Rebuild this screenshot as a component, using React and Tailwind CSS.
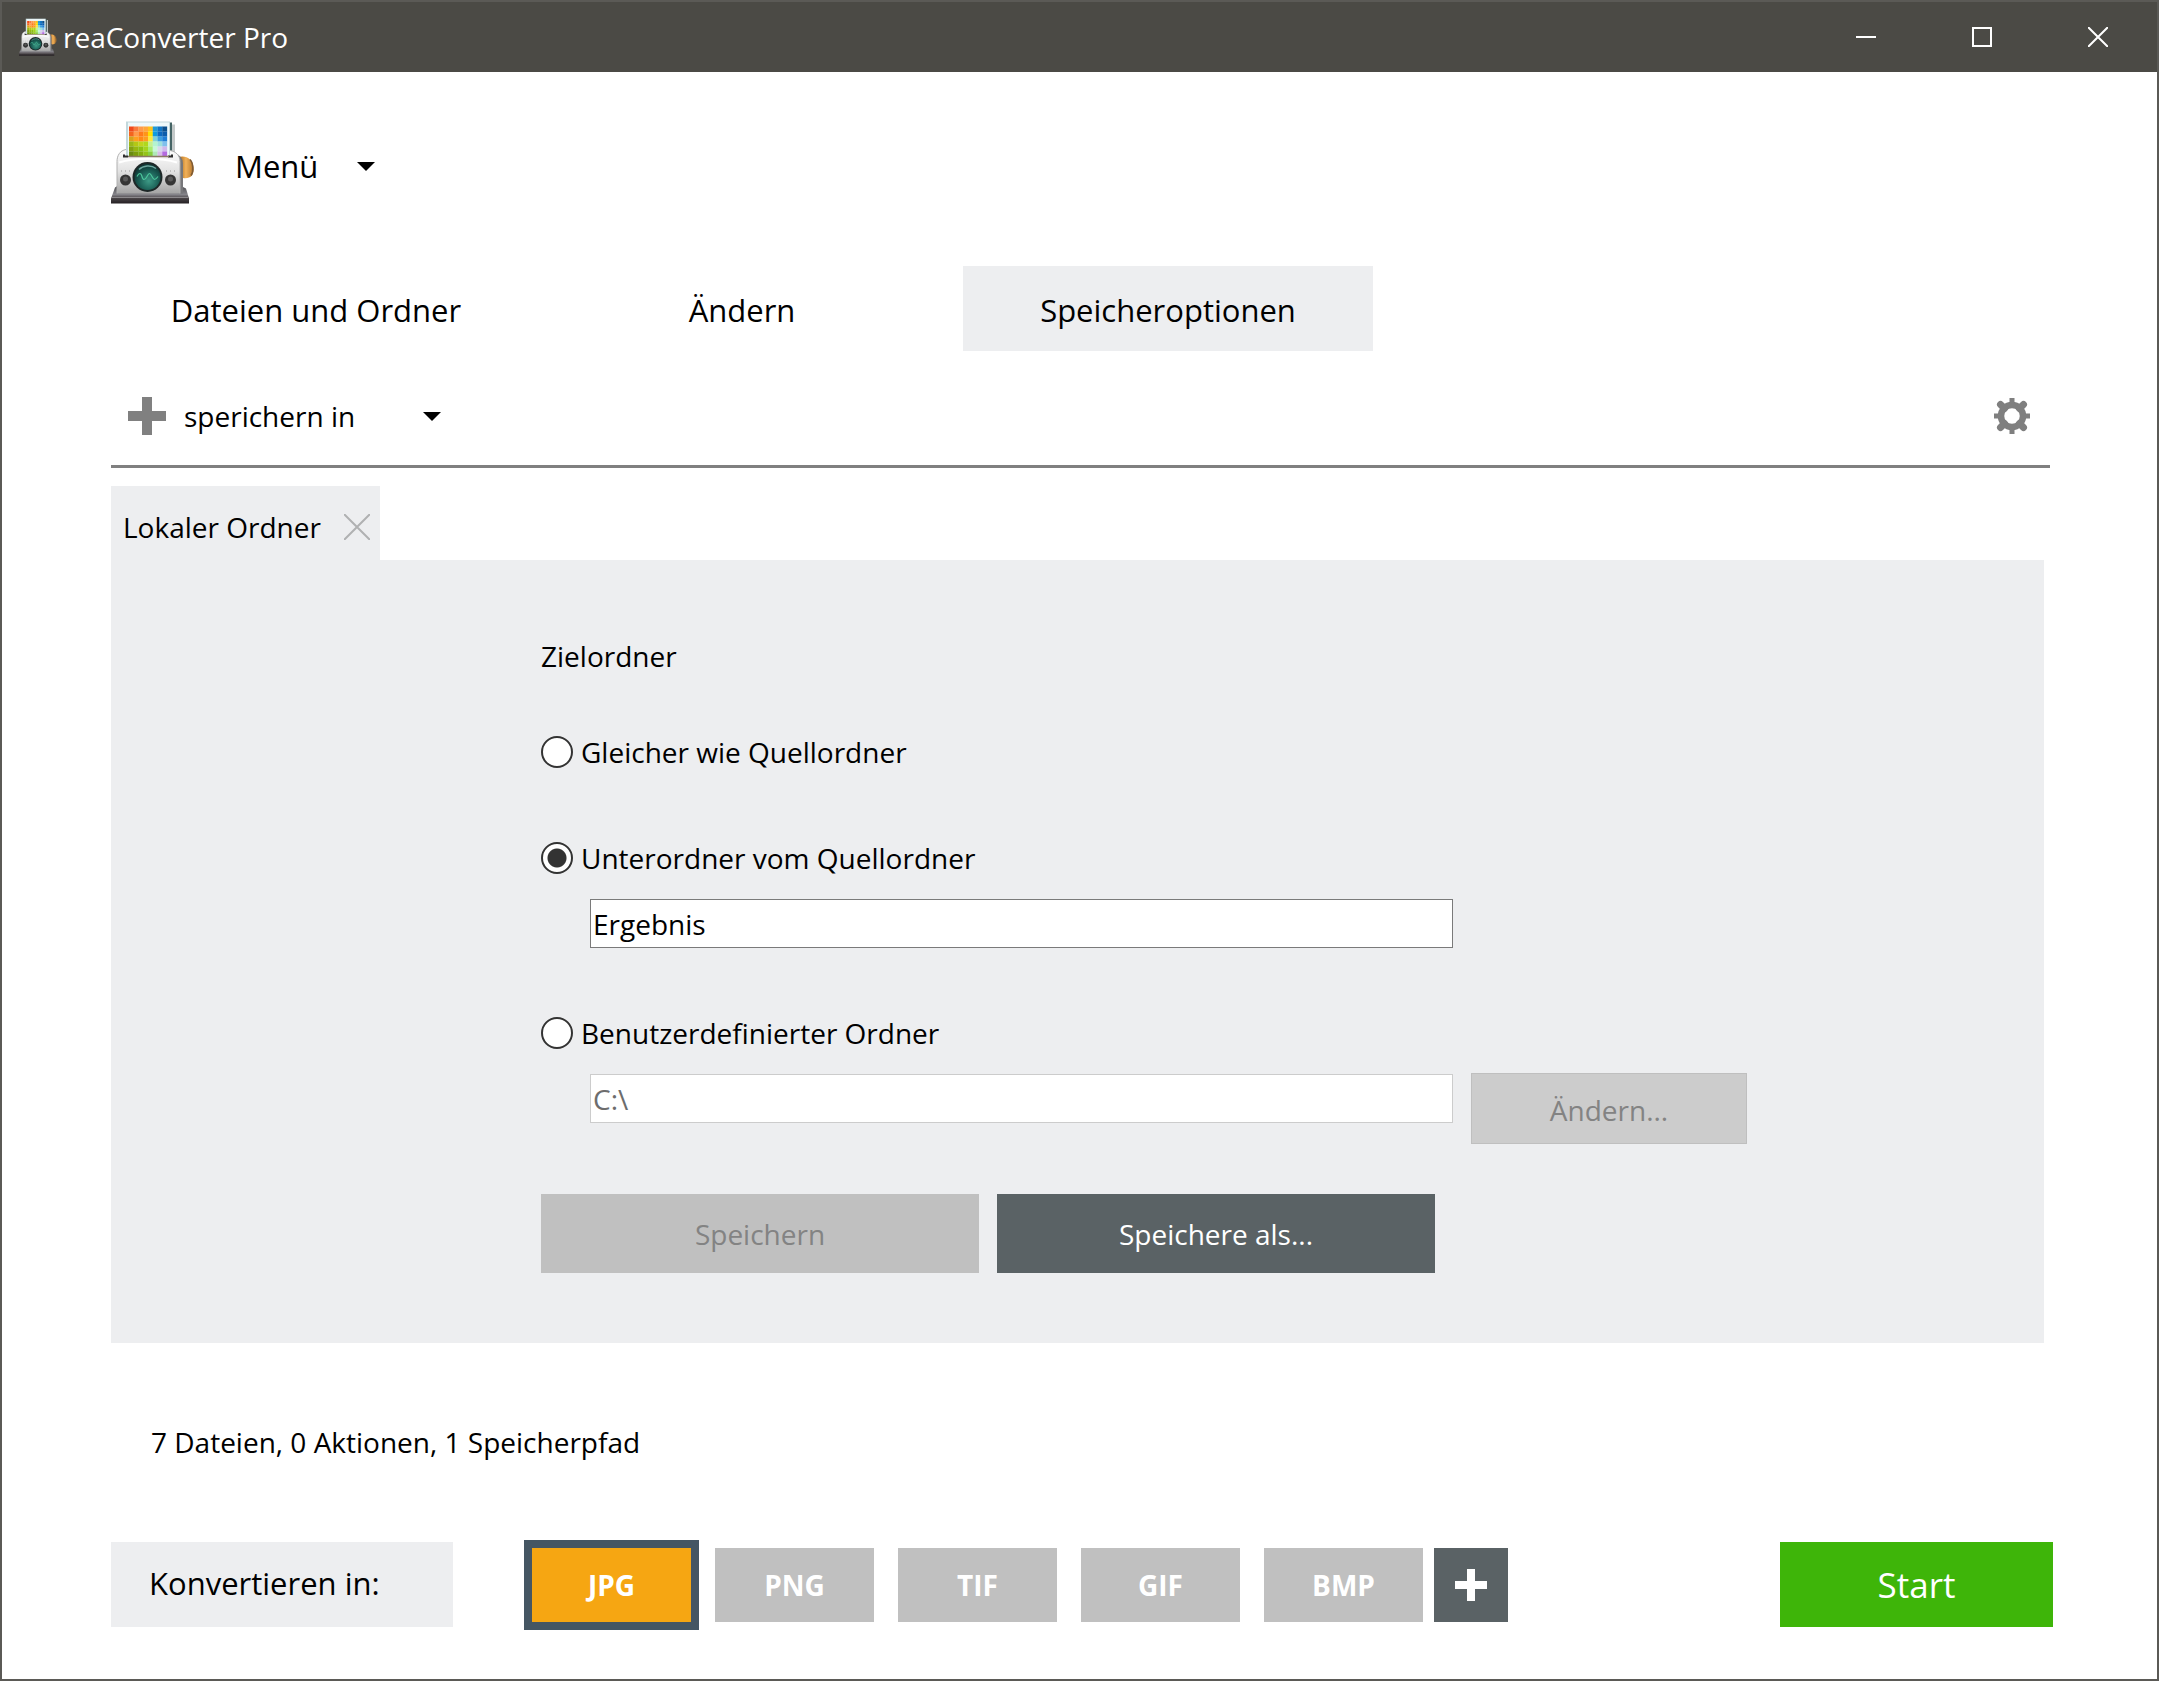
import React, { useState } from 'react';

const photoRows = [
  ['#f04a1c', '#f97a3c', '#ff9a48', '#ffa63b', '#ffc21a', '#1f9ad6', '#0f74c4', '#0a4f8c'],
  ['#f4641e', '#ff9a4a', '#ff7a1a', '#ff9518', '#ffe000', '#0f9be0', '#0a68c0', '#0b5cab'],
  ['#d8a21c', '#ffa020', '#ff8a14', '#ff9c20', '#ffe83a', '#7fd0d8', '#3a9ee0', '#1f7ed6'],
  ['#9ab818', '#b4c814', '#c0d41c', '#b0d81c', '#c8f090', '#b4f4d0', '#a0e0dc', '#80c0ec'],
  ['#84a010', '#96b810', '#8cc010', '#a4d41c', '#a8ec70', '#c8f8d8', '#d8d8ec', '#d0b8ec'],
  ['#6a8c10', '#7c9e0c', '#84b00c', '#94c418', '#88d040', '#b0e8b8', '#d8bce8', '#b46ae0'],
];

function Logo({ id, className }) {
  return (
    <svg viewBox="0 0 84 83" className={className} aria-hidden="true">
      <defs>
        <linearGradient id={`${id}-body`} x1="0" y1="0" x2="0" y2="1">
          <stop offset="0" stopColor="#fdfdfd" />
          <stop offset="0.5" stopColor="#e2e2e2" />
          <stop offset="1" stopColor="#a4a4a4" />
        </linearGradient>
        <linearGradient id={`${id}-base`} x1="0" y1="0" x2="0" y2="1">
          <stop offset="0" stopColor="#4c4c4f" />
          <stop offset="0.5" stopColor="#85848a" />
          <stop offset="0.7" stopColor="#4a4548" />
          <stop offset="1" stopColor="#241f22" />
        </linearGradient>
        <linearGradient id={`${id}-knob`} x1="0" y1="0" x2="1" y2="0">
          <stop offset="0" stopColor="#9a5c14" />
          <stop offset="0.5" stopColor="#f2b158" />
          <stop offset="1" stopColor="#b3742c" />
        </linearGradient>
        <radialGradient id={`${id}-lens`} cx="0.55" cy="0.65" r="0.6">
          <stop offset="0" stopColor="#3d9a86" />
          <stop offset="0.6" stopColor="#1c6258" />
          <stop offset="1" stopColor="#0f3a38" />
        </radialGradient>
      </defs>
      <path d="M67 37c4-2 9-1 12 2 4 3 5 12 2 16-3 3-8 4-12 1z" fill={`url(#${id}-knob)`} />
      <path d="M79 39c3 3 4 12 1 16" fill="none" stroke="#7d5a34" strokeWidth="1.5" />
      <path d="M61 4h3v30h-3z" fill="#c4c9c9" />
      <path d="M58 2h3v36h-3z" fill="#456465" />
      <path d="M15 1h44v38H15z" fill="#c3d8dc" />
      <path d="M17 2h41v37H17z" fill="#eef8fa" />
      {photoRows.map((row, y) =>
        row.map((color, x) => (
          <rect key={`${x}-${y}`} x={18 + x * 4.75} y={6 + y * 5} width="4.9" height="5.1" fill={color} />
        ))
      )}
      <path d="M0 78l4-11 3-2h62l6 3 3 10v5H0z" fill={`url(#${id}-base)`} />
      <path d="M1 77h76" stroke="#8c898c" strokeWidth="1" />
      <path d="M67 34c4 3 5 6 5 10v29h-5z" fill="#77777a" />
      <path d="M6 73V41c0-6 3-11 9-12v7h44v-6c6 1 10 5 10 11v32z" fill={`url(#${id}-body)`} />
      <path d="M6 73V41c0-6 3-11 9-12M59 30c6 1 10 5 10 11v32" fill="none" stroke="#b0b0b0" strokeWidth="1" />
      <path d="M13 34v2h4M57 36h4v-2" fill="none" stroke="#2e2e2e" strokeWidth="2" />
      <path d="M17 36h41" stroke="#8b7a64" strokeWidth="1.5" />
      <path d="M8 42c16-5 42-5 58 0" fill="none" stroke="#ffffff" strokeWidth="2" />
      <circle cx="14.5" cy="59.5" r="5.5" fill="#353535" />
      <circle cx="14.5" cy="58.5" r="2.5" fill="#5a5a5a" />
      <circle cx="59.5" cy="59.5" r="5.5" fill="#353535" />
      <circle cx="59.5" cy="58.5" r="2.5" fill="#5a5a5a" />
      <path d="M10 50.5h10M55 50.5h10" stroke="#9a9a9a" strokeWidth="1" strokeDasharray="1 3" />
      <circle cx="36.5" cy="56.5" r="15" fill="#1d2727" />
      <circle cx="36.5" cy="56.5" r="13" fill={`url(#${id}-lens)`} />
      <path
        d="M26 56c2-4 4-4 5 0s3 4 5 0 3-4 5 0 3 4 6 0"
        fill="none"
        stroke="#4cc59a"
        strokeWidth="1.2"
      />
      <path d="M28 49c4-4 12-5 17-1" fill="none" stroke="#6fa79f" strokeWidth="1.5" />
    </svg>
  );
}

function Arrow() {
  return (
    <svg viewBox="0 0 18 9" className="h-[9px] w-[18px]" aria-hidden="true">
      <path d="M0 0h18L9 9z" fill="#000" />
    </svg>
  );
}

function Gear() {
  return (
    <svg viewBox="0 0 36 36" className="h-9 w-9" fill="none" stroke="#7f7f7f" aria-hidden="true">
      <circle cx="18" cy="18" r="11" strokeWidth="6.5" />
      <path d="M18 0v6M18 30v6M0 18h6M30 18h6" strokeWidth="5" />
      <path d="M6.5 6.5l4 4M25.500 25.500l4 4M29.500 6.500l-4 4M10.500 25.500l-4 4" strokeWidth="7" strokeLinecap="round" />
    </svg>
  );
}

const radioClass =
  'h-8 w-8 shrink-0 appearance-none rounded-full border-2 border-[#333333] bg-white checked:bg-[radial-gradient(circle,#333333_9px,#ffffff_10px)]';

const tabs = ['Dateien und Ordner', 'Ändern', 'Speicheroptionen'];
const formats = ['JPG', 'PNG', 'TIF', 'GIF', 'BMP'];

function App() {
  const [activeTab, setActiveTab] = useState('Speicheroptionen');
  const [target, setTarget] = useState('sub');
  const [subfolder, setSubfolder] = useState('Ergebnis');
  const [format, setFormat] = useState('JPG');

  return (
    <div className="flex min-h-screen flex-col border-2 border-[#5b5a56] bg-white font-['Open_Sans','Noto_Sans',sans-serif] text-[28px] leading-10 text-black">
      {/* Titelleiste */}
      <header className="flex h-[70px] items-center bg-[#4b4a45] pr-px pl-[17px] text-white">
        <Logo id="small" className="h-[38px] w-[38px]" />
        <h1 className="ml-1.5 grow">reaConverter Pro</h1>
        <button type="button" aria-label="Minimieren" className="flex h-full w-[116px] items-center justify-center">
          <svg viewBox="0 0 20 20" className="h-5 w-5" stroke="#fff" strokeWidth="2">
            <path d="M0 10h20" />
          </svg>
        </button>
        <button type="button" aria-label="Maximieren" className="flex h-full w-[116px] items-center justify-center">
          <svg viewBox="0 0 20 20" className="h-5 w-5" fill="none" stroke="#fff" strokeWidth="2">
            <path d="M1 1h18v18H1z" />
          </svg>
        </button>
        <button type="button" aria-label="Schließen" className="flex h-full w-[116px] items-center justify-center">
          <svg viewBox="0 0 20 20" className="h-5 w-5" stroke="#fff" strokeWidth="2">
            <path d="M0 0l20 20M20 0L0 20" />
          </svg>
        </button>
      </header>

      <main className="flex grow flex-col pr-[104px] pl-[109px]">
        <div className="mt-12 flex items-center">
          <Logo id="large" className="h-[84px] w-[84px]" />
          <button type="button" className="ml-10 flex items-center gap-[39px] pt-2 text-[31px]">
            Menü
            <Arrow />
          </button>
        </div>

        {/* Hauptnavigation */}
        <nav className="mt-[62px] flex gap-4 text-[31px]">
          {tabs.map((tab) => (
            <button
              key={tab}
              type="button"
              onClick={() => setActiveTab(tab)}
              className={`h-[85px] w-[410px] pt-0.5 ${activeTab === tab ? 'bg-[#edeef0]' : ''}`}
            >
              {tab}
            </button>
          ))}
        </nav>

        <div className="mr-[3px] flex h-[117px] items-center justify-between border-b-[3px] border-[#808080] pt-4 pr-5 pl-[17px]">
          <button type="button" className="flex items-center">
            <svg viewBox="0 0 38 38" className="mr-[18px] h-[38px] w-[38px]" aria-hidden="true">
              <path d="M14 0h10v14h14v10H24v14H14V24H0V14h14z" fill="#808080" />
            </svg>
            <span className="mr-[68px]">sperichern in</span>
            <Arrow />
          </button>
          <button type="button" aria-label="Einstellungen">
            <Gear />
          </button>
        </div>

        {/* Speicherziel */}
        <div className="mt-[18px] mr-[9px]">
          <div className="flex h-[74px] w-[269px] items-center justify-between bg-[#edeef0] pt-2 pr-2.5 pl-3">
            <span>Lokaler Ordner</span>
            <button type="button" aria-label="Tab schließen">
              <svg viewBox="0 0 26 26" className="h-[26px] w-[26px]" stroke="#b0b1b2" strokeWidth="2">
                <path d="M0 0l26 26M26 0L0 26" />
              </svg>
            </button>
          </div>

          <form
            onSubmit={(e) => e.preventDefault()}
            className="flex flex-col items-start bg-[#edeef0] pt-[76px] pr-10 pb-[70px] pl-[430px]"
          >
            <h2>Zielordner</h2>
            <label className="mt-14 flex items-center gap-2">
              <input
                type="radio"
                name="target"
                className={radioClass}
                checked={target === 'same'}
                onChange={() => setTarget('same')}
              />
              Gleicher wie Quellordner
            </label>

            <label className="mt-[66px] flex items-center gap-2">
              <input
                type="radio"
                name="target"
                className={radioClass}
                checked={target === 'sub'}
                onChange={() => setTarget('sub')}
              />
              Unterordner vom Quellordner
            </label>
            <input
              type="text"
              aria-label="Unterordner"
              value={subfolder}
              onChange={(e) => setSubfolder(e.target.value)}
              className="mt-[21px] ml-[49px] h-[49px] w-[863px] border border-[#7a7a7a] bg-white px-0.5"
            />

            <label className="mt-[65px] flex items-center gap-2">
              <input
                type="radio"
                name="target"
                className={radioClass}
                checked={target === 'custom'}
                onChange={() => setTarget('custom')}
              />
              Benutzerdefinierter Ordner
            </label>
            <div className="mt-5 ml-[49px] flex items-start gap-[18px]">
              <input
                type="text"
                aria-label="Benutzerdefinierter Pfad"
                value="C:\"
                disabled
                readOnly
                className="mt-px h-[49px] w-[863px] border border-[#cccccc] bg-white px-0.5 text-[#6d6d6d]"
              />
              <button
                type="button"
                disabled
                className="h-[71px] w-[276px] border border-[#bfbfbf] bg-[#cccccc] pt-0.5 text-[#838383]"
              >
                Ändern...
              </button>
            </div>

            <div className="mt-[50px] flex gap-[18px]">
              <button type="submit" disabled className="h-[79px] w-[438px] bg-[#c0c0c0] text-[#838383]">
                Speichern
              </button>
              <button type="button" className="h-[79px] w-[438px] bg-[#5a6265] text-white">
                Speichere als...
              </button>
            </div>
          </form>
        </div>

        <p className="mt-[79px] ml-10">7 Dateien, 0 Aktionen, 1 Speicherpfad</p>

        {/* Formatauswahl */}
        <footer className="mt-20 flex items-center pb-[52px]">
          <div className="flex h-[85px] w-[342px] items-center bg-[#edeef0] pb-1 pl-[38px] text-[31px]">
            Konvertieren in:
          </div>
          <div className="ml-[79px] flex gap-6 text-[28px] font-bold text-white">
            {formats.map((name) => (
              <button
                key={name}
                type="button"
                onClick={() => setFormat(name)}
                className={`h-[74px] w-[159px] ${format === name ? 'bg-[#f6a612] ring-8 ring-[#455663]' : 'bg-[#c0c0c0]'}`}
              >
                {name}
              </button>
            ))}
          </div>
          <button
            type="button"
            aria-label="Format hinzufügen"
            className="ml-[11px] flex h-[74px] w-[74px] items-center justify-center bg-[#5a6265]"
          >
            <svg viewBox="0 0 32 32" className="h-8 w-8" aria-hidden="true">
              <path d="M12 0h8v12h12v8H20v12h-8V20H0v-8h12z" fill="#fff" />
            </svg>
          </button>
          <button type="button" className="ml-auto h-[85px] w-[273px] bg-[#3eb509] text-[35px] text-white">
            Start
          </button>
        </footer>
      </main>
    </div>
  );
}

export default App;
